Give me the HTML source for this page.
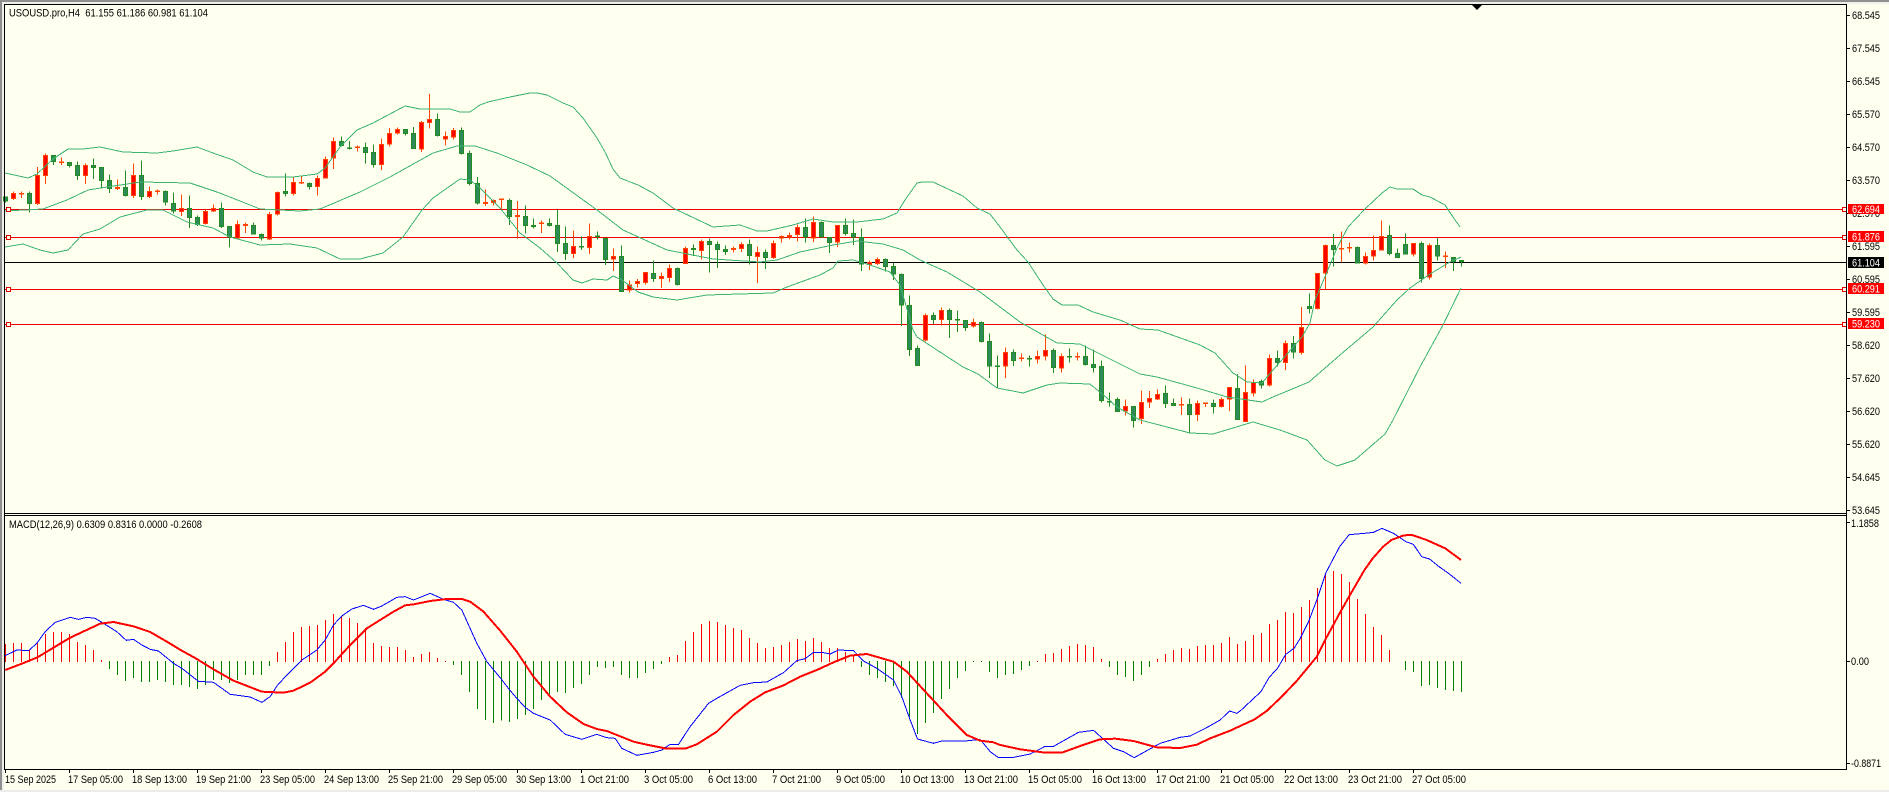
<!DOCTYPE html>
<html lang="en">
<head>
<meta charset="utf-8">
<title>USOUSD.pro,H4</title>
<style>
html,body{margin:0;padding:0;background:#FFFFF0;overflow:hidden}
svg{position:absolute;left:0;top:0;display:block}
text{font-family:"Liberation Sans",Arial,sans-serif;font-size:11px;fill:#000}
.c *{vector-effect:non-scaling-stroke;shape-rendering:crispEdges;stroke-width:1;}
.rw{stroke:#ff4500;fill:none}
.gw{stroke:#228b22;fill:none}
.rb{stroke:#ff4500;fill:#ff0000}
.gb{stroke:#228b22;fill:#2e8b57}
.band{fill:none;stroke:#3cb371;stroke-width:1;shape-rendering:crispEdges}
.hr{stroke:#ff0000;fill:none;vector-effect:non-scaling-stroke;stroke-width:1;shape-rendering:crispEdges}
.hg{stroke:#008000;fill:none;vector-effect:non-scaling-stroke;stroke-width:1;shape-rendering:crispEdges}
.bl{stroke:#0000ff;fill:none;vector-effect:non-scaling-stroke;stroke-width:1;shape-rendering:crispEdges}
.sg{stroke:#ff0000;fill:none;vector-effect:non-scaling-stroke;stroke-width:2;shape-rendering:crispEdges;stroke-linejoin:round}
.k{stroke:#000;stroke-width:1;fill:none;shape-rendering:crispEdges}
.r{stroke:#f00000;stroke-width:1;fill:none;shape-rendering:crispEdges}
.m{stroke:#e00000;stroke-width:1;fill:#FFFFF0;shape-rendering:crispEdges}
</style>
</head>
<body>
<svg width="1889" height="792" viewBox="0 0 1889 792" xmlns="http://www.w3.org/2000/svg">
<rect x="0" y="0" width="1889" height="792" fill="#FFFFF0"/>
<rect x="0" y="0" width="1889" height="2" fill="#8f8f8f"/>
<rect x="0" y="2" width="1889" height="2" fill="#f0f0ea"/>
<rect x="0" y="0" width="2" height="792" fill="#8f8f8f"/>
<rect x="2" y="2" width="2" height="788" fill="#f0f0ea"/>
<rect x="0" y="790" width="1889" height="2" fill="#ececec"/>

<!-- horizontal lines -->
<path class="r" d="M4 209.5H1847M4 237.5H1847M4 289.5H1847M4 324.5H1847"/>
<path class="k" d="M4 262.5H1847"/>

<!-- candles -->
<g class="c" transform="translate(.17,0) scale(.33333)">
<path class="gw" d="M16 590V608M88 574V638M160 466V495M208 487V503M232 484V540M280 475V537M304 502V565M328 523V579M376 511V590M424 481V600M496 571V617M520 577V640M568 586V684M592 646V678M664 607V684M688 679V743M760 667V704M784 700V722M856 520V590M928 547V569M1024 409V440M1048 423V449M1096 427V491M1120 433V503M1216 388V407M1240 381V446M1312 340V409M1384 382V464M1408 451V557M1432 531V614"/>
<path class="rw" d="M40 574V600M64 574V594M112 501V615M136 460V552M184 472V495M256 490V552M352 538V570M400 490V594M448 559V594M472 568V584M544 583V648M616 630V673M640 613V636M712 661V718M736 667V699M808 636V720M832 574V646M880 529V587M904 530V552M952 527V587M976 469V536M1000 412V507M1072 436V455M1144 415V510M1168 384V440M1192 382V404M1264 363V456M1288 282V385M1336 394V436M1360 384V419M1456 568V618M1480 599V617"/>
<path class="gb" d="M10 591V603h12V591zM82 581V610h12V581zM154 467V484h12V467zM202 488V496h12V488zM226 497V526h12V497zM274 497V502h12V497zM298 503V541h12V503zM322 542V565h12V542zM370 563V586h12V563zM418 527V589h12V527zM490 575V606h12V575zM514 611V633h12V611zM562 626V652h12V626zM586 653V673h12V653zM658 626V679h12V626zM682 680V711h12V680zM754 677V702h12V677zM778 704V714h12V704zM850 575V580h12V575zM922 551V559h12V551zM1018 425V436h12V425zM1042 444V446h12V444zM1090 443V457h12V443zM1114 458V493h12V458zM1210 389V400h12V389zM1234 401V445h12V401zM1306 359V406h12V359zM1378 392V460h12V392zM1402 461V550h12V461zM1426 551V609h12V551z"/>
<path class="rb" d="M34 581V596h12V581zM58 580V582h12V580zM106 527V611h12V527zM130 467V526h12V467zM178 486V488h12V486zM250 497V526h12V497zM346 563V566h12V563zM394 527V586h12V527zM442 575V589h12V575zM466 573V575h12V573zM538 626V634h12V626zM610 635V670h12V635zM634 626V633h12V626zM706 674V714h12V674zM730 674V676h12V674zM802 644V717h12V644zM826 578V642h12V578zM874 548V580h12V548zM898 547V549h12V547zM946 536V559h12V536zM970 479V534h12V479zM994 425V474h12V425zM1066 441V443h12V441zM1138 434V493h12V434zM1162 401V432h12V401zM1186 389V399h12V389zM1258 368V447h12V368zM1282 359V367h12V359zM1330 410V417h12V410zM1354 392V411h12V392zM1450 607V610h12V607zM1474 602V607h12V602z"/>
</g>
<g class="c" transform="translate(500.17,170) scale(.33333)">
<path class="gw" d="M28 85V165M76 106V190M100 145V176M148 145V170M172 120V246M196 169V270M244 199V240M292 184V209M316 204V285M364 226V366M460 271V336M532 292V347M580 223V258M628 205V308M652 214V294M676 226V255M748 208V284M796 238V297M916 145V217M964 154V202M988 202V249M1036 145V197M1060 148V225M1084 175V303"/>
<path class="rw" d="M4 85V120M52 93V206M124 151V189M220 181V264M268 160V252M340 235V303M388 331V368M412 327V352M436 307V344M484 307V354M508 283V336M556 229V282M604 208V268M700 229V248M724 217V246M772 229V339M820 211V267M844 196V217M868 187V208M892 163V214M940 139V216M1012 166V231M1108 271V300M1132 262V285"/>
<path class="gb" d="M22 92V139h12V92zM70 140V166h12V140zM94 167V169h12V167zM142 161V166h12V161zM166 167V220h12V167zM190 221V250h12V221zM238 229V231h12V229zM286 198V200h12V198zM310 205V268h12V205zM358 260V364h12V260zM454 311V325h12V311zM526 296V344h12V296zM574 236V238h12V236zM622 215V223h12V215zM646 224V239h12V224zM670 239V244h12V239zM742 224V256h12V224zM790 248V262h12V248zM910 173V201h12V173zM958 158V201h12V158zM982 203V217h12V203zM1030 167V190h12V167zM1054 191V201h12V191zM1078 203V282h12V203z"/>
<path class="rb" d="M-2 87V89h12V87zM46 137V139h12V137zM118 159V161h12V159zM214 230V250h12V230zM262 200V232h12V200zM334 260V267h12V260zM382 345V360h12V345zM406 335V340h12V335zM430 308V337h12V308zM478 320V325h12V320zM502 296V322h12V296zM550 236V280h12V236zM598 215V241h12V215zM694 236V238h12V236zM718 224V235h12V224zM766 248V259h12V248zM814 221V262h12V221zM838 200V204h12V200zM862 197V201h12V197zM886 173V193h12V173zM934 158V204h12V158zM1006 167V216h12V167zM1102 278V283h12V278zM1126 269V280h12V269z"/>
</g>
<g class="c" transform="translate(880.17,250) scale(.33333)">
<path class="gw" d="M16 25V65M40 39V90M64 70V228M88 136V318M112 286V347M160 187V222M208 175V264M232 181V246M256 211V243M304 214V278M328 250V384M352 316V415M400 298V348M448 316V350M520 295V369M568 295V338M616 286V347M640 299V368M664 331V457M688 427V470M712 442V485M760 469V533M856 406V474M880 445V468M928 445V550M1000 448V491M1072 372V510"/>
<path class="rw" d="M136 190V274M184 172V227M280 205V232M376 292V384M424 310V335M472 301V340M496 253V332M544 310V368M592 307V332M736 448V497M784 421V522M808 423V474M832 418V450M904 442V495M952 451V513M976 457V471M1024 442V472M1048 412V483"/>
<path class="gb" d="M10 28V49h12V28zM34 50V72h12V50zM58 74V165h12V74zM82 167V298h12V167zM106 296V346h12V296zM154 197V208h12V197zM202 182V208h12V182zM226 208V210h12V208zM250 212V232h12V212zM298 218V274h12V218zM322 275V348h12V275zM346 348V350h12V348zM394 308V331h12V308zM442 325V327h12V325zM514 302V352h12V302zM562 319V321h12V319zM610 320V343h12V320zM634 344V352h12V344zM658 350V451h12V350zM682 454V456h12V454zM706 449V484h12V449zM754 470V511h12V470zM850 431V460h12V431zM874 461V466h12V461zM922 464V493h12V464zM994 461V469h12V461zM1066 416V508h12V416z"/>
<path class="rb" d="M130 197V270h12V197zM178 182V208h12V182zM274 218V228h12V218zM370 308V348h12V308zM418 324V326h12V324zM466 320V327h12V320zM490 302V318h12V302zM538 320V354h12V320zM586 319V321h12V319zM730 470V483h12V470zM778 458V506h12V458zM802 446V456h12V446zM826 434V447h12V434zM898 463V465h12V463zM946 461V493h12V461zM970 459V461h12V459zM1018 449V469h12V449zM1042 413V447h12V413z"/>
</g>
<g class="c" transform="translate(1240.17,200) scale(.33333)">
<path class="gw" d="M64 538V566M112 451V499M160 408V476M208 280V341M280 102V200M352 139V191M448 76V166M472 145V173M496 100V163M544 124V248M592 114V182M640 172V213M664 180V200"/>
<path class="rw" d="M16 496V665M40 538V590M88 463V560M136 421V510M184 321V463M232 220V329M256 133V268M304 94V188M328 127V158M376 157V194M400 106V182M424 61V152M520 130V170M568 130V239M616 154V204"/>
<path class="gb" d="M58 545V555h12V545zM106 476V487h12V476zM154 431V456h12V431zM202 319V325h12V319zM274 137V148h12V137zM346 143V189h12V143zM442 107V161h12V107zM466 161V172h12V161zM490 134V162h12V134zM538 131V235h12V131zM586 137V168h12V137zM634 173V184h12V173zM658 181V185h12V181z"/>
<path class="rb" d="M10 578V664h12V578zM34 548V579h12V548zM82 476V555h12V476zM130 431V487h12V431zM178 383V457h12V383zM226 221V325h12V221zM250 137V219h12V137zM298 145V147h12V145zM322 142V144h12V142zM370 170V189h12V170zM394 152V168h12V152zM418 110V150h12V110zM514 131V162h12V131zM562 137V231h12V137zM610 168V170h12V168z"/>
</g>

<!-- bollinger bands -->
<polyline class="band" points="5,173 28,178 37,174 53,159 68,149 83,149 100,147 123,152 157,153 173,151 197,147 213,153 233,160 253,172 267,177 293,177 317,174 325,168 340,147 357,130 373,123 405,106 420,109 450,109 460,112 470,112 480,105 488,102 510,97 530,93 537,93 547,95 563,103 573,107 583,118 597,138 605,152 613,169 620,178 638,185 653,193 673,208 713,227 740,225 757,231 767,231 793,225 813,219 833,222 857,222 883,219 897,213 905,200 917,183 922,182 933,182 963,196 977,208 990,214 1000,227 1017,250 1028,262 1043,285 1053,299 1062,305 1078,305 1093,312 1120,320 1140,329 1158,330 1200,345 1215,353 1233,373 1247,382 1262,383 1273,370 1302,337 1310,323 1315,300 1327,272 1337,248 1348,227 1365,209 1382,193 1390,187 1397,189 1413,189 1422,195 1430,197 1445,205 1453,217 1460,227"/>
<polyline class="band" points="5,211 43,209 67,200 88,190 107,187 140,182 190,183 217,192 240,201 260,209 300,211 320,209 360,192 390,177 433,153 457,146 475,146 497,153 527,165 550,176 597,210 623,230 667,250 713,259 760,262 777,260 800,252 833,245 857,241 883,244 903,250 920,260 947,272 980,292 1020,322 1057,343 1080,344 1140,374 1157,377 1197,388 1227,397 1262,402 1273,397 1309,382 1340,355 1373,327 1397,300 1410,288 1430,274 1450,262 1461,257"/>
<polyline class="band" points="5,247 23,244 40,250 53,253 68,250 83,234 100,229 120,217 147,210 163,210 187,222 213,228 230,237 260,245 290,244 317,248 340,259 360,259 383,253 403,237 422,210 433,198 460,179 470,180 480,188 500,208 520,233 540,248 557,263 573,280 582,283 593,279 607,280 613,276 622,280 638,292 653,297 677,300 707,295 773,293 787,287 820,275 833,268 838,261 853,260 867,264 890,272 900,285 913,330 917,337 940,352 963,367 978,374 997,388 1023,393 1047,385 1060,383 1090,384 1107,398 1117,407 1140,420 1167,427 1190,433 1213,434 1253,422 1280,430 1307,440 1325,460 1337,466 1355,460 1385,434 1393,420 1420,367 1443,325 1461,288"/>

<!-- line markers -->
<rect class="m" x="6.5" y="207.5" width="4" height="4"/><rect class="m" x="6.5" y="235.5" width="4" height="4"/><rect class="m" x="6.5" y="287.5" width="4" height="4"/><rect class="m" x="6.5" y="322.5" width="4" height="4"/>
<rect class="m" x="1842.5" y="207.5" width="4" height="4"/><rect class="m" x="1842.5" y="235.5" width="4" height="4"/><rect class="m" x="1842.5" y="287.5" width="4" height="4"/><rect class="m" x="1842.5" y="322.5" width="4" height="4"/>

<!-- MACD histogram -->
<g transform="translate(.17,500) scale(.33333)">
<path class="hr" d="M16 486V432M40 486V429M64 486V429M88 486V450M112 486V429M136 486V402M160 486V396M184 486V396M208 486V402M232 486V426M256 486V435M280 486V450M304 486V480M832 486V456M856 486V426M880 486V396M904 486V381M928 486V378M952 486V375M976 486V360M1000 486V342M1024 486V348M1048 486V354M1072 486V369M1096 486V384M1120 486V429M1144 486V438M1168 486V441M1192 486V441M1216 486V450M1240 486V471M1264 486V462M1288 486V456M1312 486V474M1336 486V483"/>
<path class="hg" d="M328 483V507M352 483V525M376 483V543M400 483V534M424 483V546M448 483V546M472 483V540M496 483V546M520 483V555M544 483V555M568 483V561M592 483V567M616 483V555M640 483V540M664 483V540M688 483V549M712 483V540M736 483V525M760 483V525M784 483V525M808 483V498M1360 483V495M1384 483V525M1408 483V576M1432 483V627M1456 483V660M1480 483V669"/>
</g>
<g transform="translate(500.17,500) scale(.33333)">
<path class="hg" d="M4 483V662M28 483V666M52 483V657M76 483V645M100 483V627M124 483V600M148 483V582M172 483V576M196 483V579M220 483V564M244 483V552M268 483V525M292 483V501M316 483V504M340 483V501M364 483V525M388 483V534M412 483V534M436 483V519M460 483V507M484 483V492M1084 483V501M1108 483V525M1132 483V534M1156 483V546M1180 483V558M1204 483V594M1228 483V651M1252 483V702M1276 483V669M1300 483V639M1324 483V597M1348 483V567M1372 483V534M1396 483V513M1420 483V486M1444 483V486M1468 483V516M1492 483V534"/>
<path class="hr" d="M508 486V471M532 486V465M556 486V423M580 486V396M604 486V372M628 486V363M652 486V366M676 486V375M700 486V384M724 486V390M748 486V414M772 486V429M796 486V444M820 486V441M844 486V435M868 486V426M892 486V417M916 486V423M940 486V414M964 486V426M988 486V444M1012 486V444M1036 486V456M1060 486V465"/>
</g>
<g transform="translate(1000.17,500) scale(.33333)">
<path class="hg" d="M16 483V525M40 483V522M64 483V510M88 483V498M328 483V501M352 483V525M376 483V531M400 483V543M424 483V525M448 483V501M1216 483V510M1240 483V516M1264 483V558M1288 483V555M1312 483V564M1336 483V570M1360 483V573M1384 483V576"/>
<path class="hr" d="M112 486V483M136 486V462M160 486V459M184 486V447M208 486V438M232 486V432M256 486V435M280 486V441M304 486V477M472 486V477M496 486V462M520 486V450M544 486V444M568 486V447M592 486V438M616 486V435M640 486V435M664 486V429M688 486V411M712 486V432M736 486V423M760 486V405M784 486V399M808 486V372M832 486V360M856 486V336M880 486V339M904 486V321M928 486V300M952 486V264M976 486V219M1000 486V213M1024 486V222M1048 486V246M1072 486V297M1096 486V342M1120 486V381M1144 486V405M1168 486V450"/>
</g>

<!-- MACD lines -->
<g transform="translate(.17,500) scale(.33333)">
<polyline class="bl" points="15,467 50,450 85,452 110,430 135,395 165,367 210,352 235,358 260,352 285,355 310,370 350,395 378,421 400,418 425,435 450,448 475,453 520,490 545,505 595,544 640,547 690,583 750,591 785,607 810,590 830,558 860,525 905,480 950,450 975,420 1000,375 1025,348 1055,327 1090,316 1120,328 1145,318 1190,292 1215,290 1240,300 1290,280 1330,298 1360,307 1385,330 1430,430 1460,485 1500,533"/>
<polyline class="sg" points="15,510 60,493 112,472 160,443 210,413 300,371 340,366 400,379 450,396 500,425 545,452 590,477 640,508 700,542 785,575 850,578 880,572 930,548 975,515 1000,490 1050,435 1100,385 1180,335 1215,316 1240,313 1290,303 1340,297 1385,297 1410,305 1450,335 1500,392"/>
</g>
<g transform="translate(500.17,500) scale(.33333)">
<polyline class="bl" points="0,533 30,572 50,595 75,622 100,640 150,660 195,703 245,718 290,703 320,713 345,715 365,745 410,766 460,757 485,750 510,733 535,733 570,680 625,610 650,595 720,556 760,548 800,546 850,518 890,482 915,476 940,457 965,457 990,462 1015,450 1060,452 1090,483 1130,505 1180,540 1205,590 1230,660 1252,717 1300,730 1325,723 1395,723 1440,718 1470,755 1495,773 1500,773"/>
<polyline class="sg" points="0,392 50,455 100,530 150,590 200,637 250,672 290,687 320,693 400,725 440,734 500,746 555,746 590,733 650,695 700,645 750,605 795,577 850,556 900,530 950,510 1000,487 1050,467 1100,462 1180,485 1220,515 1280,580 1340,645 1400,705 1440,722 1480,727 1500,735"/>
</g>
<g transform="translate(1000.17,500) scale(.33333)">
<polyline class="bl" points="0,773 40,772 90,762 135,739 160,739 235,697 280,691 340,745 370,755 402,773 480,730 540,712 570,708 625,680 660,660 688,633 710,640 720,633"/>
<polyline class="sg" points="0,735 60,748 135,758 185,758 240,738 300,718 345,716 400,723 470,742 540,744 590,734 630,715 690,692 720,678"/>
</g>
<g transform="translate(1240.17,500) scale(.41436,.33333)">
<polyline class="bl" points="0,633 50,575 70,532 90,505 110,463 130,445 145,415 165,365 185,300 207,218 240,140 263,104 300,100 322,97 342,85 370,100 400,125 418,133 438,170 457,177 480,200 505,222 533,250"/>
<polyline class="sg" points="0,678 35,658 65,632 100,590 135,545 165,500 185,470 205,420 240,340 265,285 300,210 320,175 345,140 365,120 395,106 415,105 450,120 495,145 533,180"/>
</g>

<!-- frames -->
<path class="k" d="M4.5 4.5H1846.5V769.5H4.5ZM4.5 513.5H1846.5M4.5 515.5H1846.5"/>
<path d="M1471 4h12l-6 6z" fill="#000"/>

<!-- right axis ticks -->
<path class="k" d="M1847 15.5h3M1847 48.5h3M1847 81.5h3M1847 114.5h3M1847 147.5h3M1847 180.5h3M1847 213.5h3M1847 246.5h3M1847 279.5h3M1847 312.5h3M1847 345.5h3M1847 378.5h3M1847 411.5h3M1847 444.5h3M1847 477.5h3M1847 510.5h3M1847 522.5h3M1847 661.5h3M1847 763.5h3"/>
<!-- bottom ticks -->
<path class="k" d="M5.5 770v3M69.5 770v3M133.5 770v3M197.5 770v3M261.5 770v3M325.5 770v3M389.5 770v3M453.5 770v3M517.5 770v3M581.5 770v3M645.5 770v3M709.5 770v3M773.5 770v3M837.5 770v3M901.5 770v3M965.5 770v3M1029.5 770v3M1093.5 770v3M1157.5 770v3M1221.5 770v3M1285.5 770v3M1349.5 770v3M1413.5 770v3"/>

<!-- titles -->
<text x="9" y="16.5" textLength="199" lengthAdjust="spacingAndGlyphs" xml:space="preserve">USOUSD.pro,H4  61.155 61.186 60.981 61.104</text>
<text x="9" y="528" textLength="193" lengthAdjust="spacingAndGlyphs">MACD(12,26,9) 0.6309 0.8316 0.0000 -0.2608</text>

<!-- price labels -->
<g>
<text x="1852" y="19" textLength="28" lengthAdjust="spacingAndGlyphs">68.545</text>
<text x="1852" y="52" textLength="28" lengthAdjust="spacingAndGlyphs">67.545</text>
<text x="1852" y="85" textLength="28" lengthAdjust="spacingAndGlyphs">66.545</text>
<text x="1852" y="118" textLength="28" lengthAdjust="spacingAndGlyphs">65.570</text>
<text x="1852" y="151" textLength="28" lengthAdjust="spacingAndGlyphs">64.570</text>
<text x="1852" y="184" textLength="28" lengthAdjust="spacingAndGlyphs">63.570</text>
<text x="1852" y="217" textLength="28" lengthAdjust="spacingAndGlyphs">62.570</text>
<text x="1852" y="250" textLength="28" lengthAdjust="spacingAndGlyphs">61.595</text>
<text x="1852" y="283" textLength="28" lengthAdjust="spacingAndGlyphs">60.595</text>
<text x="1852" y="316" textLength="28" lengthAdjust="spacingAndGlyphs">59.595</text>
<text x="1852" y="349" textLength="28" lengthAdjust="spacingAndGlyphs">58.620</text>
<text x="1852" y="382" textLength="28" lengthAdjust="spacingAndGlyphs">57.620</text>
<text x="1852" y="415" textLength="28" lengthAdjust="spacingAndGlyphs">56.620</text>
<text x="1852" y="448" textLength="28" lengthAdjust="spacingAndGlyphs">55.620</text>
<text x="1852" y="481" textLength="28" lengthAdjust="spacingAndGlyphs">54.645</text>
<text x="1852" y="514" textLength="28" lengthAdjust="spacingAndGlyphs">53.645</text>
<text x="1851" y="527" textLength="28" lengthAdjust="spacingAndGlyphs">1.1858</text>
<text x="1851" y="665" textLength="18" lengthAdjust="spacingAndGlyphs">0.00</text>
<text x="1851" y="767" textLength="30" lengthAdjust="spacingAndGlyphs">-0.8871</text>
</g>

<!-- price tags -->
<rect x="1848" y="204" width="36" height="10" fill="#ff0000"/>
<rect x="1848" y="231" width="36" height="11" fill="#ff0000"/>
<rect x="1848" y="257" width="36" height="11" fill="#000000"/>
<rect x="1848" y="283" width="36" height="11" fill="#ff0000"/>
<rect x="1848" y="318" width="36" height="11" fill="#ff0000"/>
<text x="1852" y="213" textLength="28" lengthAdjust="spacingAndGlyphs" style="fill:#fff">62.694</text>
<text x="1852" y="240.5" textLength="28" lengthAdjust="spacingAndGlyphs" style="fill:#fff">61.876</text>
<text x="1852" y="266.5" textLength="28" lengthAdjust="spacingAndGlyphs" style="fill:#fff">61.104</text>
<text x="1852" y="292.5" textLength="28" lengthAdjust="spacingAndGlyphs" style="fill:#fff">60.291</text>
<text x="1852" y="327.5" textLength="28" lengthAdjust="spacingAndGlyphs" style="fill:#fff">59.230</text>

<!-- time labels -->
<g>
<text x="5" y="783" textLength="51" lengthAdjust="spacingAndGlyphs">15 Sep 2025</text>
<text x="68" y="783" textLength="55" lengthAdjust="spacingAndGlyphs">17 Sep 05:00</text>
<text x="132" y="783" textLength="55" lengthAdjust="spacingAndGlyphs">18 Sep 13:00</text>
<text x="196" y="783" textLength="55" lengthAdjust="spacingAndGlyphs">19 Sep 21:00</text>
<text x="260" y="783" textLength="55" lengthAdjust="spacingAndGlyphs">23 Sep 05:00</text>
<text x="324" y="783" textLength="55" lengthAdjust="spacingAndGlyphs">24 Sep 13:00</text>
<text x="388" y="783" textLength="55" lengthAdjust="spacingAndGlyphs">25 Sep 21:00</text>
<text x="452" y="783" textLength="55" lengthAdjust="spacingAndGlyphs">29 Sep 05:00</text>
<text x="516" y="783" textLength="55" lengthAdjust="spacingAndGlyphs">30 Sep 13:00</text>
<text x="580" y="783" textLength="49" lengthAdjust="spacingAndGlyphs">1 Oct 21:00</text>
<text x="644" y="783" textLength="49" lengthAdjust="spacingAndGlyphs">3 Oct 05:00</text>
<text x="708" y="783" textLength="49" lengthAdjust="spacingAndGlyphs">6 Oct 13:00</text>
<text x="772" y="783" textLength="49" lengthAdjust="spacingAndGlyphs">7 Oct 21:00</text>
<text x="836" y="783" textLength="49" lengthAdjust="spacingAndGlyphs">9 Oct 05:00</text>
<text x="900" y="783" textLength="54" lengthAdjust="spacingAndGlyphs">10 Oct 13:00</text>
<text x="964" y="783" textLength="54" lengthAdjust="spacingAndGlyphs">13 Oct 21:00</text>
<text x="1028" y="783" textLength="54" lengthAdjust="spacingAndGlyphs">15 Oct 05:00</text>
<text x="1092" y="783" textLength="54" lengthAdjust="spacingAndGlyphs">16 Oct 13:00</text>
<text x="1156" y="783" textLength="54" lengthAdjust="spacingAndGlyphs">17 Oct 21:00</text>
<text x="1220" y="783" textLength="54" lengthAdjust="spacingAndGlyphs">21 Oct 05:00</text>
<text x="1284" y="783" textLength="54" lengthAdjust="spacingAndGlyphs">22 Oct 13:00</text>
<text x="1348" y="783" textLength="54" lengthAdjust="spacingAndGlyphs">23 Oct 21:00</text>
<text x="1412" y="783" textLength="54" lengthAdjust="spacingAndGlyphs">27 Oct 05:00</text>
</g>
</svg>
</body>
</html>
